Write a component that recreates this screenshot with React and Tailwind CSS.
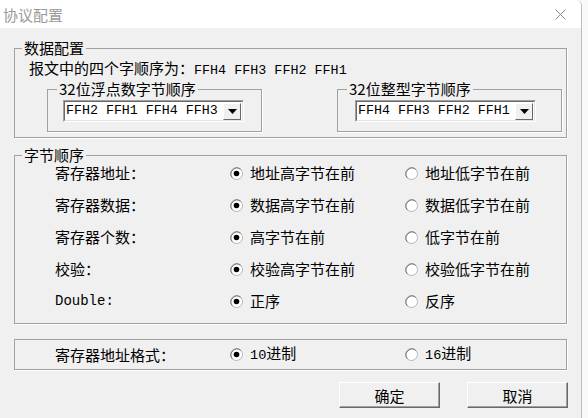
import React from "react";

const CJK = "font-['Noto_Sans_CJK_SC',sans-serif]";
const MONO = "font-['Liberation_Mono','Noto_Sans_CJK_SC',monospace]";

function Radio({ checked }) {
  return (
    <svg width="13" height="13" viewBox="0 0 13 13" className="shrink-0">
      <circle cx="6.5" cy="6.5" r="6" fill="#fff" stroke="#b4b4b4" />
      <path d="M2.3 10.7 A6 6 0 0 1 10.7 2.3" fill="none" stroke="#6e6e6e" strokeWidth="1" />
      {checked && <circle cx="6.5" cy="6.5" r="2.8" fill="#000" />}
    </svg>
  );
}

function Opt({ checked, last, children }) {
  return (
    <div className={`${last ? "" : "w-[175px]"} flex items-center gap-[7px]`}>
      <Radio checked={checked} />
      <span className="text-[15px] leading-[20px] text-black whitespace-nowrap">{children}</span>
    </div>
  );
}

function Combo({ value }) {
  return (
    <div className="w-[181px] h-[22px] bg-white border border-t-[#a0a0a0] border-l-[#a0a0a0] border-r-white border-b-white flex items-center">
      <div className="flex-1 h-full border border-t-[#696969] border-l-[#696969] border-r-[#e3e3e3] border-b-[#e3e3e3] flex items-center">
        <span className={`${MONO} text-[13.3px] leading-none pl-[1px] text-black whitespace-nowrap`}>{value}</span>
        <div className="ml-auto mr-[1px] shrink-0 w-[18px] h-[17px] bg-[#f0f0f0] border border-t-white border-l-white border-r-[#696969] border-b-[#696969] flex items-center justify-center">
          <svg width="9" height="5" viewBox="0 0 9 5">
            <path d="M0 0 H9 L4.5 5 Z" fill="#000" />
          </svg>
        </div>
      </div>
    </div>
  );
}

function Row({ label, a, b, mono }) {
  return (
    <div className="flex items-center h-[20px] pl-[40px]">
      <div className={`w-[175px] leading-[20px] ${mono ? `${MONO} text-[14px]` : "text-[15px]"}`}>{label}</div>
      <Opt checked>{a}</Opt>
      <Opt last>{b}</Opt>
    </div>
  );
}

function Btn({ children }) {
  return (
    <button className="w-[101px] h-[26px] bg-[#f0f0f0] border border-t-white border-l-white border-r-[#696969] border-b-[#696969] shadow-[inset_-1px_-1px_0_#a0a0a0] text-[15px] leading-none text-black">
      {children}
    </button>
  );
}

export default function App() {
  return (
    <div className={`${CJK} w-[588px] h-[418px] flex bg-[#f9f9f9] text-black overflow-hidden`}>
      <div className="w-[582px] shrink-0 h-full flex flex-col border-r border-[#bdbdbd] rounded-tr-[6px] overflow-hidden">
        {/* title bar */}
        <div className="h-[28px] bg-white flex items-center justify-between pl-[3px] pr-[15px]">
          <span className="text-[15px] text-[#9a9a9a] leading-none">协议配置</span>
          <svg width="11" height="11" viewBox="0 0 11 11">
            <path d="M0.5 0.5 L10.5 10.5 M10.5 0.5 L0.5 10.5" stroke="#8a8a8a" strokeWidth="1" />
          </svg>
        </div>

        <div className="flex-1 bg-[#f0f0f0] flex flex-col items-start">
          {/* 数据配置 */}
          <fieldset className="mt-[12px] ml-[14px] w-[553px] min-w-0 h-[98px] border border-[#a0a0a0] shadow-[1px_1px_0_#fff]">
            <legend className="ml-[7px] px-[2px] text-[15px] leading-[16px]">数据配置</legend>
            <div className="pl-[14px] pt-[4px] text-[15px] leading-[16px]">
              报文中的四个字顺序为：<span className={`${MONO} text-[13.4px]`}>FFH4 FFH3 FFH2 FFH1</span>
            </div>
            <div className="flex mt-[2px]">
              <fieldset className="ml-[32px] w-[215px] min-w-0 h-[51px] border border-[#a0a0a0] shadow-[1px_1px_0_#fff]">
                <legend className="ml-[9px] px-[2px] text-[15px] leading-[16px]">32位浮点数字节顺序</legend>
                <div className="mt-[3px] ml-[15px]">
                  <Combo value="FFH2 FFH1 FFH4 FFH3" />
                </div>
              </fieldset>
              <fieldset className="ml-[75px] w-[225px] min-w-0 h-[51px] border border-[#a0a0a0] shadow-[1px_1px_0_#fff]">
                <legend className="ml-[9px] px-[2px] text-[15px] leading-[16px]">32位整型字节顺序</legend>
                <div className="mt-[3px] ml-[17px]">
                  <Combo value="FFH4 FFH3 FFH2 FFH1" />
                </div>
              </fieldset>
            </div>
          </fieldset>

          {/* 字节顺序 */}
          <fieldset className="mt-[9px] ml-[14px] w-[553px] min-w-0 h-[177px] border border-[#a0a0a0] shadow-[1px_1px_0_#fff]">
            <legend className="ml-[7px] px-[2px] text-[15px] leading-[16px]">字节顺序</legend>
            <div className="flex flex-col gap-[12px]">
              <Row label="寄存器地址：" a="地址高字节在前" b="地址低字节在前" />
              <Row label="寄存器数据：" a="数据高字节在前" b="数据低字节在前" />
              <Row label="寄存器个数：" a="高字节在前" b="低字节在前" />
              <Row label="校验：" a="校验高字节在前" b="校验低字节在前" />
              <Row label="Double:" mono a="正序" b="反序" />
            </div>
          </fieldset>

          {/* 地址格式 */}
          <div className="mt-[15px] ml-[14px] w-[553px] h-[31px] border border-[#a0a0a0] shadow-[1px_1px_0_#fff] flex items-center">
            <div className="flex items-center h-[20px] pl-[40px]">
              <div className="w-[175px] text-[15px] leading-[20px]">寄存器地址格式：</div>
              <Opt checked><span className={`${MONO} text-[13.6px]`}>10</span>进制</Opt>
              <Opt last><span className={`${MONO} text-[13.6px]`}>16</span>进制</Opt>
            </div>
          </div>

          {/* buttons */}
          <div className="mt-[12px] ml-[339px] flex gap-[27px]">
            <Btn>确定</Btn>
            <Btn>取消</Btn>
          </div>
        </div>
      </div>
      <div className="flex-1 bg-[#f9f9f9]" />
    </div>
  );
}
